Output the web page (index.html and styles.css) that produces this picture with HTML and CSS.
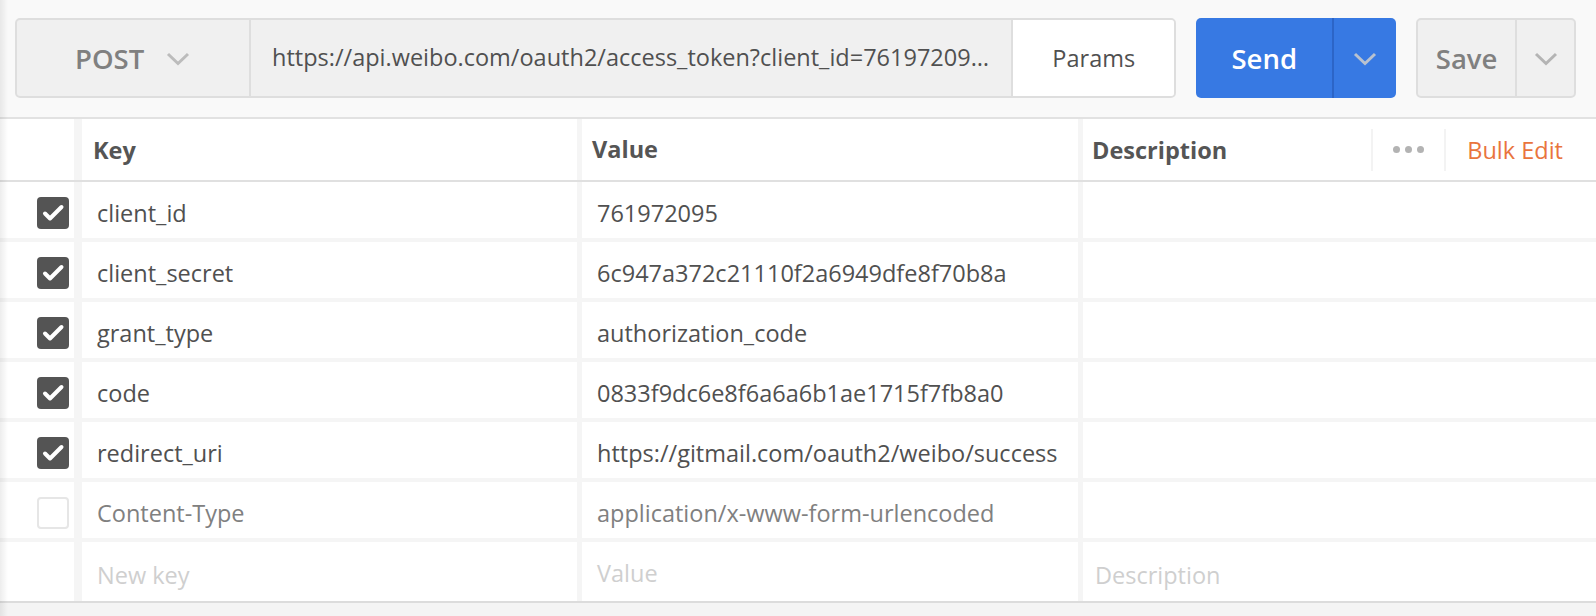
FILE: index.html
```html
<!DOCTYPE html>
<html>
<head>
<meta charset="utf-8">
<link rel="stylesheet" href="styles.css">
</head>
<body>
<div class="app">
  <div class="topbar">
    <div class="request">
      <div class="method">
        <span class="method-name">POST</span>
        <svg class="chev" width="24" height="14" viewBox="0 0 24 14"><polyline points="2,2 12,11.5 22,2" fill="none" stroke="#bcbcbc" stroke-width="3"/></svg>
      </div>
      <div class="url">https://api.weibo.com/oauth2/access_token?client_id=7619720953&amp;</div>
      <div class="params">Params</div>
    </div>
    <div class="send">
      <div class="send-main">Send</div>
      <div class="send-drop">
        <svg width="24" height="14" viewBox="0 0 24 14"><polyline points="2,2 12,11.5 22,2" fill="none" stroke="#b9c2cf" stroke-width="3"/></svg>
      </div>
    </div>
    <div class="save">
      <div class="save-main">Save</div>
      <div class="save-drop">
        <svg width="24" height="14" viewBox="0 0 24 14"><polyline points="2,2 12,11.5 22,2" fill="none" stroke="#b4b4b4" stroke-width="3"/></svg>
      </div>
    </div>
  </div>

  <div class="table">
    <div class="row head">
      <div class="cell check"></div>
      <div class="cell key">Key</div>
      <div class="cell value">Value</div>
      <div class="cell desc">
        <span>Description</span>
        <div class="dots"><i></i><i></i><i></i></div>
        <span class="bulk">Bulk Edit</span>
      </div>
    </div>

    <div class="row">
      <div class="cell check"><span class="box on"><svg width="32" height="32" viewBox="0 0 32 32"><polyline points="8,16.5 13,21.5 24.5,10" fill="none" stroke="#fff" stroke-width="4" stroke-linecap="round" stroke-linejoin="round"/></svg></span></div>
      <div class="cell key">client_id</div>
      <div class="cell value">761972095</div>
      <div class="cell desc"></div>
    </div>
    <div class="row">
      <div class="cell check"><span class="box on"><svg width="32" height="32" viewBox="0 0 32 32"><polyline points="8,16.5 13,21.5 24.5,10" fill="none" stroke="#fff" stroke-width="4" stroke-linecap="round" stroke-linejoin="round"/></svg></span></div>
      <div class="cell key">client_secret</div>
      <div class="cell value">6c947a372c21110f2a6949dfe8f70b8a</div>
      <div class="cell desc"></div>
    </div>
    <div class="row">
      <div class="cell check"><span class="box on"><svg width="32" height="32" viewBox="0 0 32 32"><polyline points="8,16.5 13,21.5 24.5,10" fill="none" stroke="#fff" stroke-width="4" stroke-linecap="round" stroke-linejoin="round"/></svg></span></div>
      <div class="cell key">grant_type</div>
      <div class="cell value">authorization_code</div>
      <div class="cell desc"></div>
    </div>
    <div class="row">
      <div class="cell check"><span class="box on"><svg width="32" height="32" viewBox="0 0 32 32"><polyline points="8,16.5 13,21.5 24.5,10" fill="none" stroke="#fff" stroke-width="4" stroke-linecap="round" stroke-linejoin="round"/></svg></span></div>
      <div class="cell key">code</div>
      <div class="cell value">0833f9dc6e8f6a6a6b1ae1715f7fb8a0</div>
      <div class="cell desc"></div>
    </div>
    <div class="row">
      <div class="cell check"><span class="box on"><svg width="32" height="32" viewBox="0 0 32 32"><polyline points="8,16.5 13,21.5 24.5,10" fill="none" stroke="#fff" stroke-width="4" stroke-linecap="round" stroke-linejoin="round"/></svg></span></div>
      <div class="cell key">redirect_uri</div>
      <div class="cell value">https://gitmail.com/oauth2/weibo/success</div>
      <div class="cell desc"></div>
    </div>
    <div class="row off">
      <div class="cell check"><span class="box"></span></div>
      <div class="cell key">Content-Type</div>
      <div class="cell value">application/x-www-form-urlencoded</div>
      <div class="cell desc"></div>
    </div>
    <div class="row placeholder last">
      <div class="cell check"></div>
      <div class="cell key">New key</div>
      <div class="cell value">Value</div>
      <div class="cell desc">Description</div>
    </div>
  </div>
  <div class="footer"></div>
</div>
</body>
</html>
```

FILE: styles.css
```css
* { box-sizing: border-box; }
html, body { margin: 0; padding: 0; }
body {
  font-family: "Open Sans", "Liberation Sans", sans-serif;
  font-size: 23.5px;
  color: #505050;
  background: #f4f4f4;
}
.app {
  position: relative;
  width: 1596px;
  height: 616px;
  overflow: hidden;
}
.app::before {
  content: "";
  position: absolute;
  left: 0; top: 0; bottom: 0;
  width: 8px;
  background: linear-gradient(to right, rgba(0,0,0,0.07), rgba(0,0,0,0));
  z-index: 5;
}
.topbar {
  display: flex;
  align-items: stretch;
  height: 119px;
  padding: 18px 20px 19px 15px;
  background: #f9f9f9;
  border-bottom: 2px solid #e2e2e2;
}
.request {
  display: flex;
  width: 1162px;
  border: 2px solid #dedede;
  border-radius: 5px;
  background: #f0f0f0;
  overflow: hidden;
}
.method {
  width: 234px;
  display: flex;
  align-items: center;
  padding-left: 58px;
  border-right: 2px solid #dedede;
  color: #808080;
  font-weight: 600;
  font-size: 27.5px;
}
.method .chev { margin-left: 22px; margin-top: 2px; }
.url {
  flex: 1;
  min-width: 0;
  padding: 0 12px 0 21px;
  white-space: nowrap;
  overflow: hidden;
  text-overflow: ellipsis;
  display: block;
  line-height: 75px;
}
.params {
  width: 163px;
  display: flex;
  align-items: center;
  justify-content: center;
  background: #fff;
  border-left: 2px solid #dedede;
}
.send {
  display: flex;
  width: 200px;
  margin-left: 20px;
  background: #3779e3;
  border-radius: 5px;
  color: #fff;
  font-weight: 600;
  font-size: 27.5px;
}
.send-main {
  width: 138px;
  display: flex;
  align-items: center;
  justify-content: center;
  border-right: 2px solid #2c65c7;
}
.send-drop, .save-drop {
  flex: 1;
  display: flex;
  align-items: center;
  justify-content: center;
  padding-top: 2px;
}
.save {
  display: flex;
  width: 160px;
  margin-left: 20px;
  background: #f0f0f0;
  border: 2px solid #dedede;
  border-radius: 5px;
  color: #808080;
  font-weight: 600;
  font-size: 27.5px;
}
.save-main {
  width: 99px;
  display: flex;
  align-items: center;
  justify-content: center;
  border-right: 2px solid #dedede;
}
.table {
  background: #fff;
  border-bottom: 2px solid #dcdcdc;
}
.row {
  display: flex;
  height: 60px;
  border-bottom: 4px solid #f5f5f5;
}
.row.head {
  height: 63px;
  border-bottom: 2px solid #e0e0e0;
  font-weight: 700;
  color: #555;
}
.row.last { border-bottom: none; height: 59px; }
.cell {
  display: flex;
  align-items: center;
  background: #fff;
  white-space: nowrap;
  overflow: hidden;
}
.row:not(.head) .cell { padding-top: 6px; }
.cell.check {
  width: 74px;
  justify-content: flex-end;
  padding-right: 5px;
}
.cell.key {
  width: 503px;
  border-left: 8px solid #f5f5f5;
  padding-left: 15px;
}
.cell.value {
  width: 501px;
  border-left: 5px solid #f5f5f5;
  padding-left: 15px;
  padding-right: 18px;
  display: block;
  line-height: 50px;
  text-overflow: ellipsis;
}
.cell.desc {
  flex: 1;
  border-left: 5px solid #f5f5f5;
  padding-left: 12px;
}
.row.head .cell.key { padding-left: 11px; }
.row.head .cell.value { padding-left: 10px; line-height: 61px; }
.row.head .cell.desc { padding-left: 9px; padding-right: 33px; }
.dots {
  margin-left: auto;
  width: 75px;
  height: 42px;
  display: flex;
  align-items: center;
  justify-content: center;
  gap: 5px;
  border-left: 2px solid #f3f3f3;
  border-right: 2px solid #f3f3f3;
}
.dots i {
  display: block;
  width: 7px;
  height: 7px;
  border-radius: 50%;
  background: #b3b3b3;
}
.bulk {
  margin-left: 21px;
  font-weight: 400;
  color: #e9743d;
}
.box {
  display: block;
  width: 32px;
  height: 32px;
  border-radius: 4px;
  border: 2px solid #e6e6e6;
  background: #fff;
}
.box.on {
  border: none;
  background: #545454;
}
.box svg { display: block; }
.row.off .cell.key, .row.off .cell.value { color: #808080; }
.row.placeholder .cell { color: #cfcfcf; }
.footer {
  height: 20px;
  background: #f4f4f4;
}
```
